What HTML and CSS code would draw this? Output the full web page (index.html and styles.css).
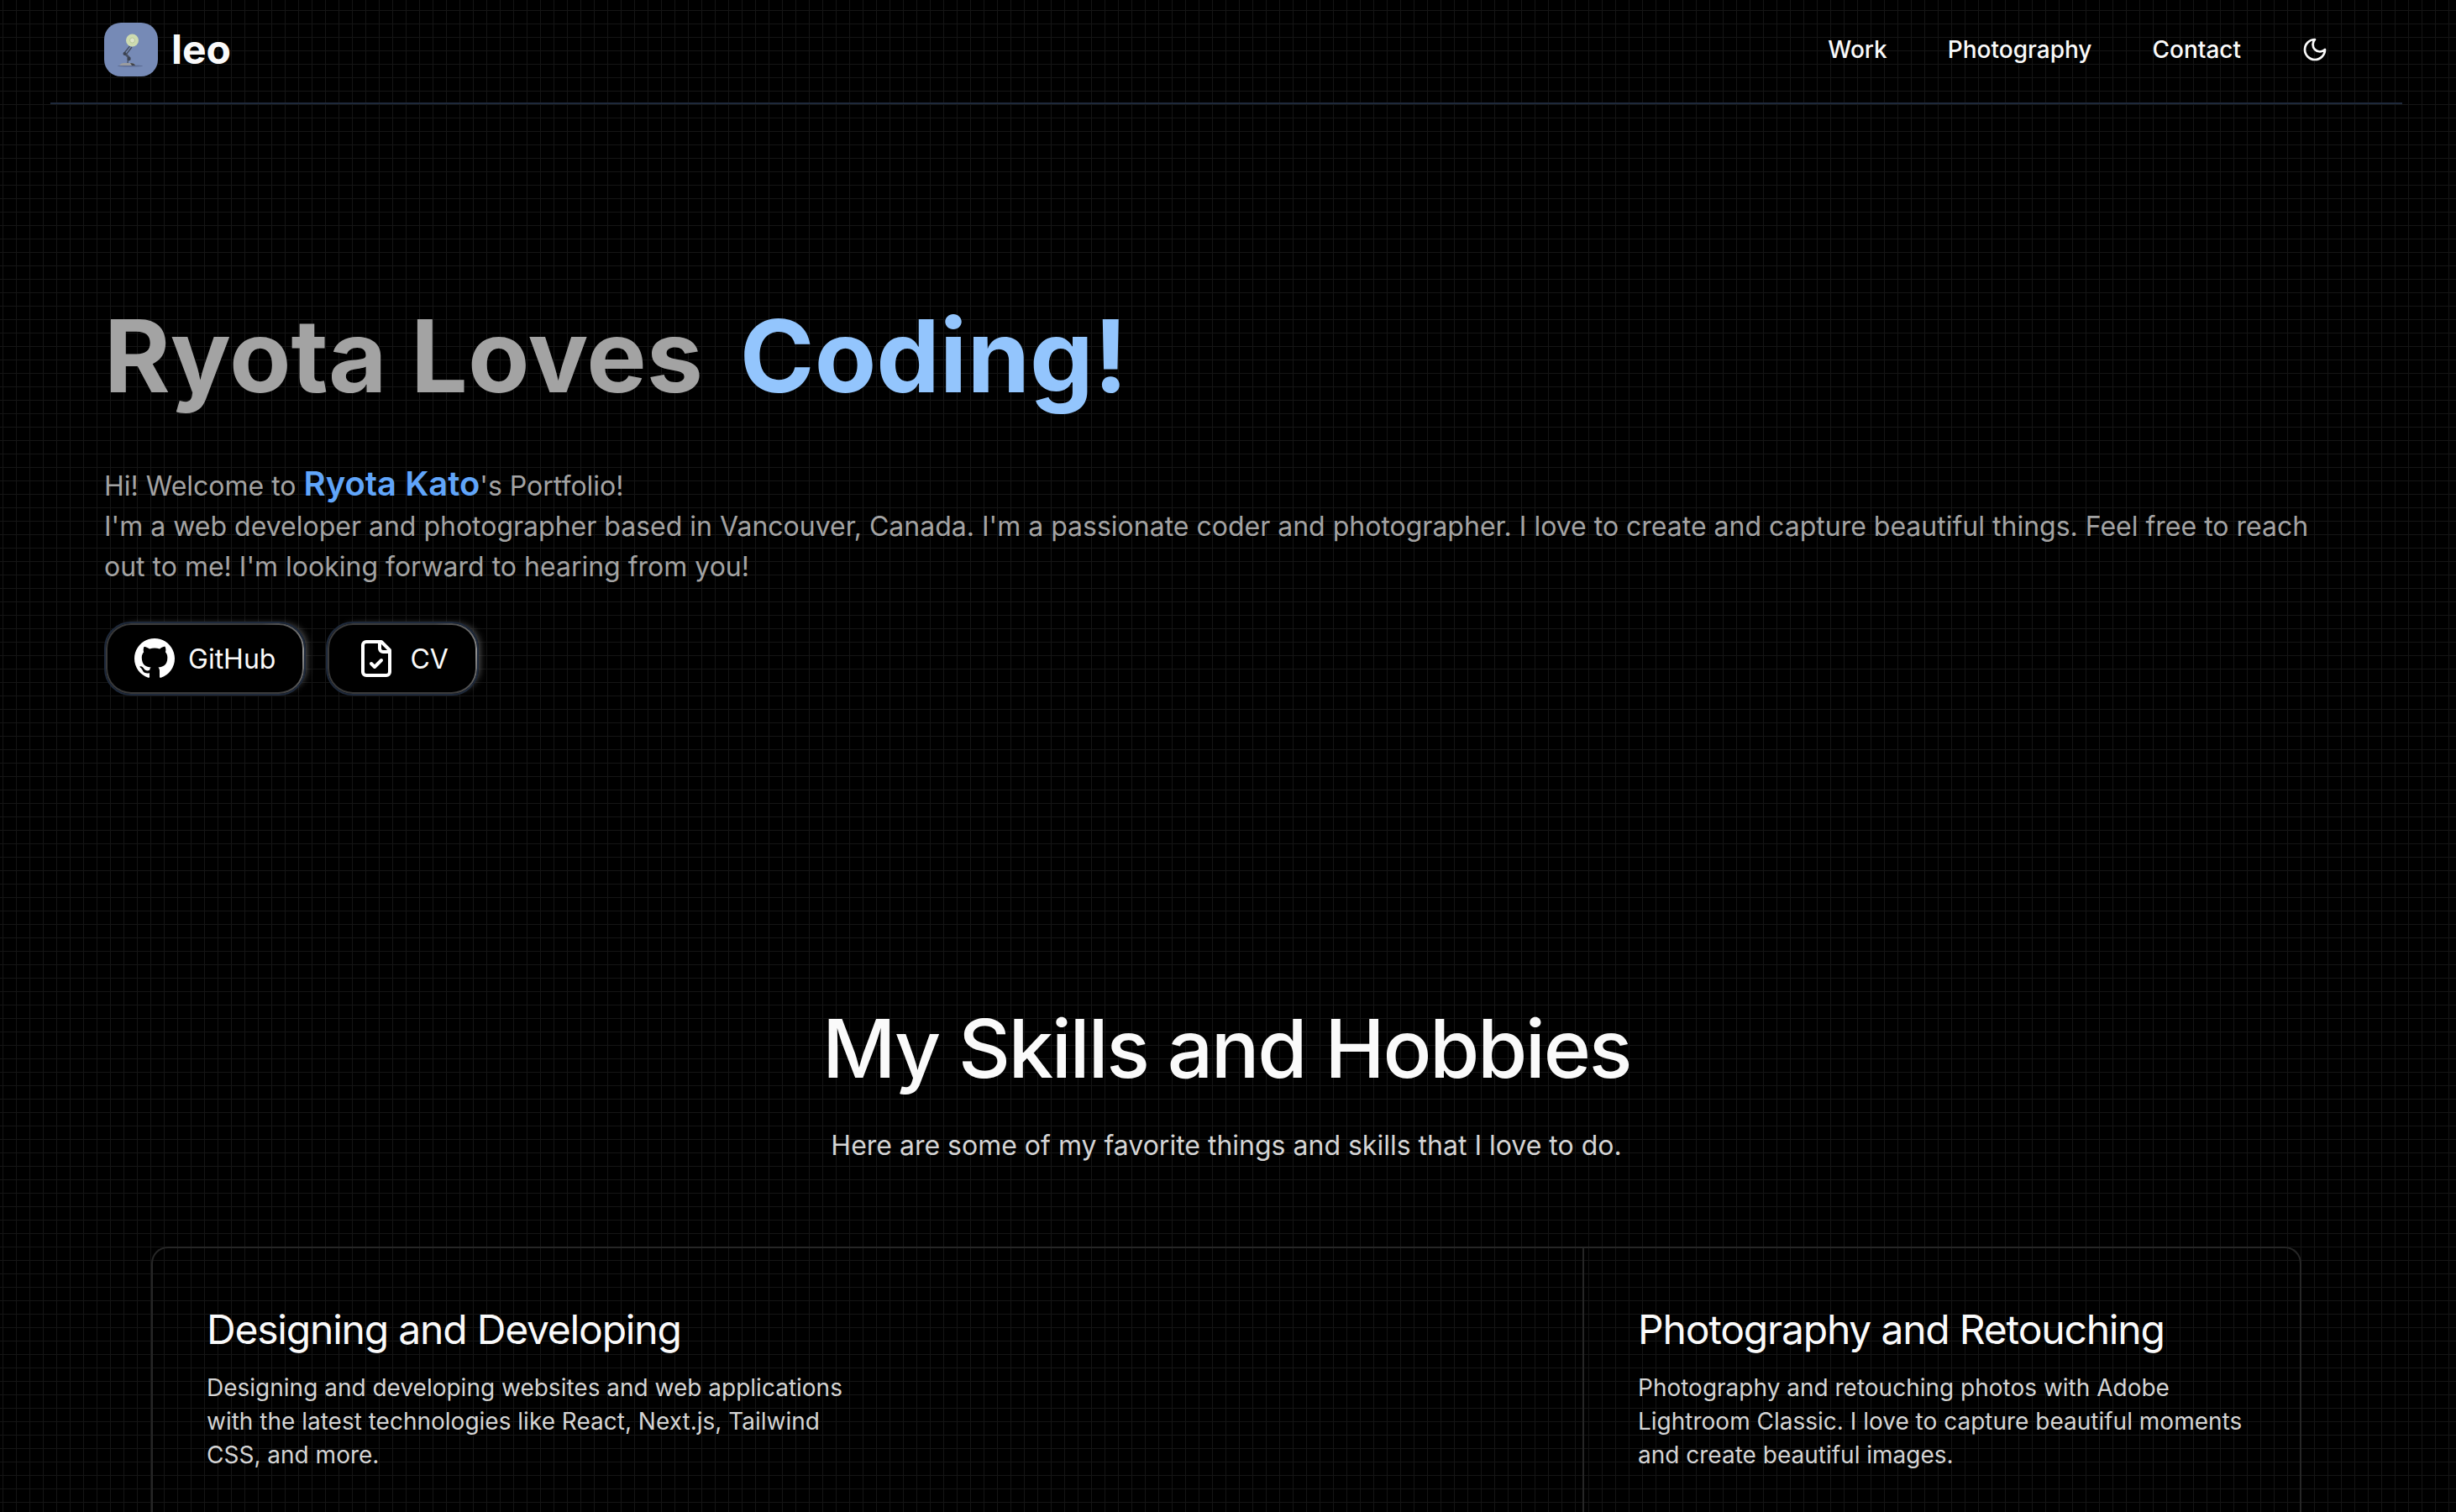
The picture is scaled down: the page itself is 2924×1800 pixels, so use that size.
FILE: index.html
```html
<!DOCTYPE html>
<html lang="en">
<head>
<meta charset="utf-8">
<meta name="viewport" content="width=device-width, initial-scale=1">
<title>leo</title>
<link rel="stylesheet" href="styles.css">
</head>
<body>
<header class="header">
  <a class="brand" href="#">
    <svg class="brand-logo" viewBox="0 0 64 64" aria-hidden="true">
      <rect width="64" height="64" rx="20" fill="#768ab6"/>
      <ellipse cx="31" cy="51.500" rx="15" ry="1" fill="#5b6b93"/>
      <path d="M30.500 28l-7 8.500 5.500 5.500M33 29l-6.500 8.500 4.500 4.500M28.500 43l-.5 5" fill="none" stroke="#444c5c" stroke-width="1.300" stroke-linejoin="round"/>
      <circle cx="24.500" cy="37" r="2" fill="#3b4250"/>
      <circle cx="29.500" cy="43" r="2.200" fill="#3b4250"/>
      <path d="M18 51q2-3 5-3h9q4 0 5 3z" fill="#9a9c9f"/>
      <path d="M31 48q5 0 6 3h-4z" fill="#3f424a"/>
      <circle cx="33.500" cy="21" r="7.500" fill="#cddbb0"/>
      <circle cx="33.500" cy="21" r="3" fill="#dfe6cb" stroke="#b8c79b"/>
    </svg>
    <span>leo</span>
  </a>
  <nav class="nav" aria-label="Main">
    <a href="#work">Work</a>
    <a href="#photography">Photography</a>
    <a href="#contact">Contact</a>
    <button class="theme" type="button" aria-label="Toggle theme">
      <svg viewBox="0 0 24 24" aria-hidden="true"><path d="M12 3a6 6 0 0 0 9 9 9 9 0 1 1-9-9Z"/></svg>
    </button>
  </nav>
</header>
<main>
  <section class="hero">
    <h1><span>Ryota Loves</span><span class="accent">Coding!</span></h1>
    <p class="intro">Hi! Welcome to <strong>Ryota Kato</strong>'s Portfolio!<br>I'm a web developer and photographer based in Vancouver, Canada. I'm a passionate coder and photographer. I love to create and capture beautiful things. Feel free to reach out to me! I'm looking forward to hearing from you!</p>
    <div class="actions">
      <a class="pill" href="#github"><span class="pill-body">
        <svg class="github" viewBox="0 0 16 16" aria-hidden="true"><path d="M8 0C3.580 0 0 3.580 0 8c0 3.540 2.290 6.530 5.470 7.590.4.070.55-.17.55-.38 0-.19-.01-.82-.01-1.490-2.010.37-2.530-.49-2.690-.94-.09-.23-.48-.94-.82-1.130-.28-.15-.68-.52-.01-.53.63-.01 1.080.58 1.230.82.72 1.210 1.870.87 2.330.66.07-.52.28-.87.51-1.070-1.780-.2-3.640-.89-3.640-3.950 0-.87.31-1.590.82-2.150-.08-.2-.36-1.020.08-2.120 0 0 .67-.21 2.200.82.64-.18 1.320-.27 2-.27s1.360.09 2 .27c1.530-1.040 2.200-.82 2.200-.82.44 1.100.16 1.920.08 2.120.51.56.82 1.270.82 2.150 0 3.070-1.870 3.750-3.650 3.950.29.25.54.73.54 1.480 0 1.070-.01 1.930-.01 2.200 0 .21.15.46.55.38A8.010 8.010 0 0 0 16 8c0-4.420-3.580-8-8-8Z"/></svg>
        GitHub
      </span></a>
      <a class="pill" href="#cv"><span class="pill-body">
        <svg class="file" viewBox="0 0 24 24" aria-hidden="true"><path d="M15 2H6a2 2 0 0 0-2 2v16a2 2 0 0 0 2 2h12a2 2 0 0 0 2-2V7Z"/><path d="M14 2v4a2 2 0 0 0 2 2h4"/><path d="m9 15 2 2 4-4"/></svg>
        CV
      </span></a>
    </div>
  </section>
  <section class="skills" id="work">
    <h2>My Skills and Hobbies</h2>
    <p class="lead">Here are some of my favorite things and skills that I love to do.</p>
    <div class="cards">
      <article class="card">
        <h3>Designing and Developing</h3>
        <p>Designing and developing websites and web applications with the latest technologies like React, Next.js, Tailwind CSS, and more.</p>
      </article>
      <article class="card" id="photography">
        <h3>Photography and Retouching</h3>
        <p>Photography and retouching photos with Adobe Lightroom Classic. I love to capture beautiful moments and create beautiful images.</p>
      </article>
    </div>
  </section>
</main>
</body>
</html>
```
FILE: styles.css
```css
* { box-sizing: border-box; }
h1, h2, h3, p { margin: 0; }
a { color: inherit; text-decoration: none; }

body {
  margin: 0;
  color: #fafafa;
  font-family: Inter, "Liberation Sans", sans-serif;
  background-color: #000;
  background-image:
    linear-gradient(to right, #151515 1px, transparent 1px),
    linear-gradient(to bottom, #151515 1px, transparent 1px);
  background-size: 16px 16px;
  background-position: 3px 12px;
}

.header {
  display: flex;
  align-items: center;
  justify-content: space-between;
  margin: 0 64px 0 60px;
  padding: 26px 64px 30px;
  border-bottom: 2px solid #1e293b;
}
.brand {
  display: flex;
  align-items: center;
  gap: 16px;
  font-size: 48px;
  line-height: 66px;
  font-weight: 700;
}
.brand-logo { width: 64px; height: 64px; }
.nav {
  display: flex;
  align-items: center;
  gap: 72px;
  font-size: 28px;
  line-height: 40px;
  font-weight: 500;
}
.theme {
  display: flex;
  padding: 0;
  margin-right: 24px;
  border: 0;
  background: none;
  color: inherit;
}
.theme svg {
  width: 32px;
  height: 32px;
  fill: none;
  stroke: currentColor;
  stroke-width: 2;
  stroke-linecap: round;
  stroke-linejoin: round;
}

.hero { padding: 224px 124px 0; }
h1 {
  display: flex;
  gap: 44px;
  color: #a3a3a3;
  font-size: 120px;
  line-height: 152px;
  font-weight: 700;
}
.accent { color: #93c5fd; }
.intro {
  margin-top: 52px;
  color: #a3a3a3;
  font-size: 32px;
  line-height: 48px;
}
.intro strong {
  color: #60a5fa;
  font-size: 40px;
  font-weight: 600;
}
.actions {
  display: flex;
  gap: 24px;
  margin-top: 41px;
}
.pill {
  display: flex;
  height: 88px;
  padding: 2px;
  border: 2px solid #1e293b;
  border-radius: 32px;
  background:
    linear-gradient(#000, #000) content-box,
    radial-gradient(circle 60px at 100% 40%, #909090, #3a3a3a) padding-box;
  box-shadow: 6px -2px 8px -5px #5a5a5a;
  font-size: 32px;
}
.pill-body {
  display: flex;
  align-items: center;
  gap: 16px;
  padding: 0 32px;
}
.github { width: 48px; height: 48px; fill: #fff; }
.file {
  width: 48px;
  height: 48px;
  fill: none;
  stroke: #fff;
  stroke-width: 2;
  stroke-linecap: round;
  stroke-linejoin: round;
}

.skills { padding: 368px 184px 0 180px; }
h2 {
  font-size: 96px;
  line-height: 104px;
  font-weight: 500;
  letter-spacing: -0.025em;
  text-align: center;
}
.lead {
  margin-top: 36px;
  color: #d4d4d4;
  font-size: 32px;
  line-height: 56px;
  text-align: center;
}
.cards {
  display: grid;
  grid-template-columns: 2fr 1fr;
  margin-top: 92px;
  border: 2px solid #262626;
  border-bottom: 0;
  border-radius: 20px 20px 0 0;
}
.card { padding: 64px; }
.card:first-child { border-right: 2px solid #262626; }
.card h3 {
  font-size: 48px;
  line-height: 66px;
  font-weight: 400;
  letter-spacing: -0.025em;
}
.card p {
  max-width: 768px;
  margin-top: 16px;
  color: #d4d4d4;
  font-size: 28px;
  line-height: 40px;
}
```
